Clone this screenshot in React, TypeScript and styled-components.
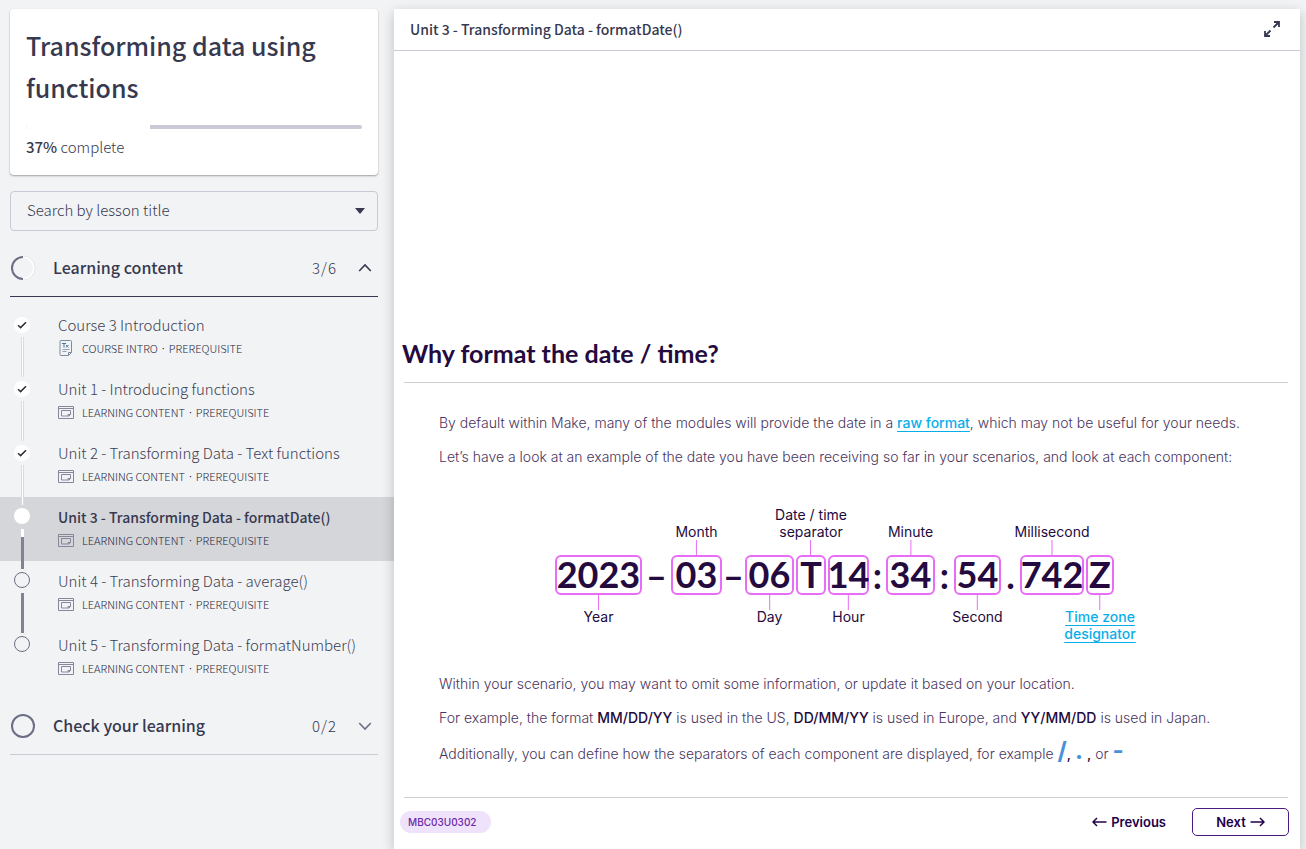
import React from "react";
import styled, { createGlobalStyle, css } from "styled-components";

const sans = `"Noto Sans CJK SC", "Open Sans", sans-serif`;
const inter = `Inter, "Liberation Sans", sans-serif`;
const display = `Lato, "Open Sans", sans-serif`;

const ink = "#36394f";
const inkMid = "#3c3e54";
const inkSoft = "#6b6e84";
const line = "#c9cad6";
const plum = "#240a3e";
const pink = "#e86cf5";
const sky = "#08aeea";

const GlobalStyle = createGlobalStyle`
  *, *::before, *::after { box-sizing: border-box; }
  body { margin: 0; background: #f2f3f5; color: ${ink}; font-family: ${sans}; }
  h1, h2, h3, p, ol { margin: 0; padding: 0; }
  button, select { font: inherit; color: inherit; }
`;

const Page = styled.div`
  display: grid;
  grid-template-columns: 394px minmax(0, 1fr);
  min-height: 100vh;
  padding: 9px 6px 0 0;
`;

const Sidebar = styled.aside`
  display: flex;
  flex-direction: column;
`;

const Card = styled.section`
  margin: 0 16px 0 10px;
  padding: 15px 16px 16px;
  background: #fff;
  border-radius: 4px;
  box-shadow: 0 1px 2px rgba(0, 0, 0, 0.35);
`;

const CourseTitle = styled.h1`
  font-size: 25px;
  line-height: 42px;
  font-weight: 500;
`;

const Track = styled.div`
  display: flex;
  height: 4px;
  margin-top: 17px;
  border-radius: 2px;
  background: ${line};
  overflow: hidden;
`;

const Fill = styled.div`
  background: #fff;
`;

const Complete = styled.p`
  margin-top: 6px;
  font-size: 15px;
  line-height: 24px;
  font-weight: 300;
  strong { font-weight: 500; }
`;

const SearchWrap = styled.div`
  position: relative;
  margin: 16px 16px 0 10px;
  svg { position: absolute; right: 13px; top: 17px; pointer-events: none; }
`;

const Search = styled.select`
  display: block;
  width: 100%;
  height: 40px;
  padding: 0 32px 4px 16px;
  appearance: none;
  border: 1px solid ${line};
  border-radius: 4px;
  background: transparent;
  font-size: 15px;
  font-weight: 300;
`;

const SectionButton = styled.button<{ $open?: boolean }>`
  display: flex;
  align-items: center;
  height: 57px;
  margin: 9px 16px 0 10px;
  padding: 0 6px 0 0;
  border: 0;
  border-bottom: 1px solid ${(p) => (p.$open ? ink : line)};
  background: none;
  text-align: left;
`;

const SectionName = styled.span`
  flex: 1;
  margin-left: 17px;
  padding-bottom: 2px;
  font-size: 16px;
  font-weight: 500;
`;

const Count = styled.span`
  margin-right: 21px;
  padding-bottom: 2px;
  font-size: 15px;
  font-weight: 300;
  letter-spacing: 1px;
`;

const Lessons = styled.ol`
  list-style: none;
  padding-top: 8px;
`;

const Lesson = styled.li<{ $active?: boolean }>`
  display: flex;
  height: 64px;
  padding: 8px 16px 0 14px;
  background: ${(p) => (p.$active ? "#d5d6da" : "none")};
`;

type State = "done" | "active" | "todo";
type Rail = "done" | "half" | "todo" | "none";

const Bubble = styled.span<{ $state: State; $rail: Rail }>`
  position: relative;
  display: grid;
  place-items: center;
  width: 16px;
  height: 16px;
  margin-top: ${(p) => (p.$state === "done" ? 4 : 3)}px;
  border-radius: 50%;
  ${(p) => (p.$state === "todo" ? css`border: 1px solid ${inkSoft};` : css`background: #fff;`)}
  ${(p) =>
    p.$rail !== "none" &&
    css`
      &::after {
        content: "";
        position: absolute;
        z-index: 1;
        top: ${p.$state === "active" ? 21 : 20}px;
        left: ${p.$state === "todo" ? 6 : 7}px;
        width: 3px;
        height: 40px;
        border: solid #d9dadf;
        border-width: 0 1px;
        background: #fff;
        ${p.$rail === "todo" && css`border: 0; background: #808297;`}
        ${p.$rail === "half" &&
        css`border: 0; background: linear-gradient(#fff 8px, #808297 8px);`}
      }
    `}
`;

const LessonText = styled.a`
  margin-left: 28px;
  color: ${inkMid};
  text-decoration: none;
`;

const LessonName = styled.span<{ $active?: boolean }>`
  display: block;
  font-size: ${(p) => (p.$active ? 14 : 15)}px;
  line-height: 24px;
  font-weight: ${(p) => (p.$active ? 500 : 300)};
  color: ${(p) => (p.$active ? ink : "inherit")};
`;

const LessonMeta = styled.span`
  display: flex;
  align-items: center;
  height: 22px;
  color: #26283a;
  font-size: 11px;
  line-height: 22px;
  font-weight: 300;
  svg { margin-right: 8px; }
`;

const Dot = styled.span`
  padding: 0 4px;
  font-family: "Open Sans", sans-serif;
  font-weight: 400;
`;

const Main = styled.main`
  position: relative;
  display: flex;
  flex-direction: column;
  background: #fff;
  box-shadow: 0 4px 12px rgba(0, 0, 0, 0.22);
`;

const TopBar = styled.header`
  display: flex;
  align-items: center;
  justify-content: space-between;
  height: 42px;
  padding: 0 19px 0 16px;
  border-bottom: 1px solid ${line};
`;

const UnitTitle = styled.h2`
  padding-bottom: 2px;
  font-size: 14px;
  font-weight: 500;
`;

const IconButton = styled.button`
  display: grid;
  padding: 0 0 2px;
  border: 0;
  background: none;
`;

const Slide = styled.article`
  flex: 1;
  display: flex;
  flex-direction: column;
  justify-content: flex-end;
  margin: 0 12px 0 10px;
  font-family: ${inter};
  color: ${plum};
`;

const SlideTitle = styled.h3`
  margin-left: -2px;
  padding-bottom: 13px;
  font-family: ${display};
  font-size: 25px;
  line-height: 32px;
  font-weight: 700;
`;

const SlideBody = styled.div`
  display: flex;
  flex-direction: column;
  gap: 10px;
  padding: 28px 0 29px 35px;
  border: solid #d3cbd3;
  border-width: 1px 0;
`;

const Para = styled.p<{ $tall?: boolean }>`
  font-size: 14px;
  line-height: ${(p) => (p.$tall ? 28 : 24)}px;
  font-weight: 300;
  color: #4a3560;
  strong { font-weight: 500; color: ${plum}; }
`;

const SkyLink = styled.a`
  font-weight: 500;
  color: ${sky};
  text-underline-offset: 3px;
`;

const Mark = styled.b`
  font-size: 24px;
  line-height: 16px;
  font-weight: 700;
  color: #4a90d9;
`;

const Diagram = styled.div`
  display: flex;
  align-items: center;
  height: 40px;
  margin: 76px 0 67px 116px;
  font-family: ${display};
  font-size: 36px;
  line-height: 34px;
  font-weight: 700;
`;

const Token = styled.span<{ $w: number }>`
  position: relative;
  display: flex;
  justify-content: center;
  width: ${(p) => p.$w}px;
  height: 40px;
  border: 2px solid ${pink};
  border-radius: 6px;
`;

const Sep = styled.span<{ $w: number }>`
  display: flex;
  justify-content: center;
  width: ${(p) => p.$w}px;
`;

const Callout = styled.span<{ $above?: boolean }>`
  position: absolute;
  left: 50%;
  ${(p) => (p.$above ? "bottom: 100%;" : "top: 100%;")}
  display: flex;
  flex-direction: ${(p) => (p.$above ? "column-reverse" : "column")};
  align-items: center;
  transform: translateX(-50%);
  font-family: ${inter};
  font-size: 14px;
  line-height: 17px;
  font-weight: 400;
  text-align: center;
  white-space: pre;
  &::before {
    content: "";
    width: 1px;
    height: 17px;
    margin-bottom: ${(p) => (p.$above ? 0 : -2)}px;
    background: ${pink};
  }
`;

const Footer = styled.footer`
  display: flex;
  align-items: center;
  height: 48px;
  margin: 0 0 3px -4px;
`;

const Chip = styled.span`
  margin-right: auto;
  padding: 0 14px 0 8px;
  border-radius: 11px;
  background: #efe3fb;
  color: #6d28a8;
  font-size: 10px;
  line-height: 22px;
  font-weight: 500;
`;

const NavButton = styled.button<{ $outlined?: boolean }>`
  display: flex;
  align-items: center;
  justify-content: center;
  gap: 4px;
  height: 28px;
  padding: 0;
  border: 0;
  background: none;
  color: #22004a;
  font-size: 13px;
  font-weight: 600;
  ${(p) =>
    p.$outlined &&
    css`
      width: 97px;
      margin: 0 -1px 0 26px;
      border: 1px solid #4b1a80;
      border-radius: 5px;
    `}
`;

const Chevron = ({ up }: { up?: boolean }) => (
  <svg width="14" height="10" viewBox="0 0 14 10" fill="none" stroke={up ? ink : inkSoft} strokeWidth="1.6">
    <path d={up ? "M1.2 8 7 2l5.8 6" : "M1.2 2 7 8l5.8-6"} />
  </svg>
);

const Tick = () => (
  <svg width="10" height="8" viewBox="0 0 10 8" fill="none" stroke="#2c2d38" strokeWidth="1.5">
    <path d="M1 4.2 3.6 6.6 9 1.2" />
  </svg>
);

const Ring = ({ half }: { half?: boolean }) => (
  <svg width="26" height="26" viewBox="0 0 26 26" fill="none" strokeWidth="2">
    <circle cx="13" cy="13" r="11" stroke={half ? "#fff" : inkSoft} />
    {half && <path d="M13 2a11 11 0 0 0 0 22" stroke={inkSoft} />}
    {half && <path d="M13 1a12 12 0 0 1 0 24" stroke="#d9dadf" strokeWidth=".6" />}
  </svg>
);

const ContentIcon = () => (
  <svg width="16" height="13" viewBox="0 0 16 13" fill="none" stroke="#85879a">
    <path d="M.5.5h15v12H.5zM.5 2.5h15M3.5 4.5h9v4l-1.5 1.500H3.500z" />
    <path d="M10 10V8.500h2.500" />
  </svg>
);

const IntroIcon = () => (
  <svg width="16" height="16" viewBox="0 0 16 16" fill="none" stroke="#7f8ba3">
    <path d="M3 .5h9.5q1 0 1 1v11l-3 3H3q-1 0-1-1v-13q0-1 1-1zM10.5 15.5v-3h3" />
    <path d="M4.5 9.5h7M4.5 11.5h4" strokeWidth=".8" />
    <path d="M4 3.5h4M6 3.5v4M8 5l2.5 2.5M10.5 5 8 7.5" stroke="#4f7397" />
  </svg>
);

const Arrow = ({ left }: { left?: boolean }) => (
  <svg width="15" height="10" viewBox="0 0 15 10" fill="none" stroke="currentColor" strokeWidth="1.5">
    <path d={left ? "M14.5 5H1M5 1 1 5l4 4" : "M.5 5H14M10 1l4 4-4 4"} />
  </svg>
);

const lessons: { name: string; kind: string; rail: Rail; state: State }[] = [
  { name: "Course 3 Introduction", kind: "COURSE INTRO", rail: "done", state: "done" },
  { name: "Unit 1 - Introducing functions", kind: "LEARNING CONTENT", rail: "done", state: "done" },
  { name: "Unit 2 - Transforming Data - Text functions", kind: "LEARNING CONTENT", rail: "done", state: "done" },
  { name: "Unit 3 - Transforming Data - formatDate()", kind: "LEARNING CONTENT", rail: "half", state: "active" },
  { name: "Unit 4 - Transforming Data - average()", kind: "LEARNING CONTENT", rail: "todo", state: "todo" },
  { name: "Unit 5 - Transforming Data - formatNumber()", kind: "LEARNING CONTENT", rail: "none", state: "todo" },
];

type Part = { text: string; w: number; label?: string; above?: boolean; link?: boolean };

const parts: Part[] = [
  { text: "2023", w: 87, label: "Year" },
  { text: "–", w: 29 },
  { text: "03", w: 51, label: "Month", above: true },
  { text: "–", w: 23 },
  { text: "06", w: 49, label: "Day" },
  { text: "", w: 2 },
  { text: "T", w: 30, label: "Date / time\nseparator", above: true },
  { text: "", w: 2 },
  { text: "14", w: 41, label: "Hour" },
  { text: ":", w: 17 },
  { text: "34", w: 49, label: "Minute", above: true },
  { text: ":", w: 19 },
  { text: "54", w: 47, label: "Second" },
  { text: ".", w: 19 },
  { text: "742", w: 64, label: "Millisecond", above: true },
  { text: "", w: 2 },
  { text: "Z", w: 28, label: "Time zone\ndesignator", link: true },
];

export default function App() {
  return (
    <>
      <GlobalStyle />
      <Page>
        <Sidebar>
          <Card>
            <CourseTitle>Transforming data using functions</CourseTitle>
            <Track role="progressbar" aria-valuenow={37} aria-label="Course progress">
              <Fill style={{ width: "37%" }} />
            </Track>
            <Complete>
              <strong>37%</strong> complete
            </Complete>
          </Card>
          <SearchWrap>
            <Search aria-label="Search by lesson title" defaultValue="">
              <option value="">Search by lesson title</option>
              {lessons.map((l) => (
                <option key={l.name}>{l.name}</option>
              ))}
            </Search>
            <svg width="10" height="6" viewBox="0 0 10 6" fill={ink}>
              <path d="M0 0h10L5 6z" />
            </svg>
          </SearchWrap>
          <SectionButton $open aria-expanded>
            <Ring half />
            <SectionName>Learning content</SectionName>
            <Count>3/6</Count>
            <Chevron up />
          </SectionButton>
          <Lessons>
            {lessons.map((l) => {
              const active = l.state === "active";
              return (
                <Lesson key={l.name} $active={active}>
                  <Bubble $state={l.state} $rail={l.rail}>
                    {l.state === "done" && <Tick />}
                  </Bubble>
                  <LessonText href="#">
                    <LessonName $active={active}>{l.name}</LessonName>
                    <LessonMeta>
                      {l.kind === "COURSE INTRO" ? <IntroIcon /> : <ContentIcon />}
                      {l.kind}
                      <Dot>·</Dot>
                      PREREQUISITE
                    </LessonMeta>
                  </LessonText>
                </Lesson>
              );
            })}
          </Lessons>
          <SectionButton aria-expanded={false}>
            <Ring />
            <SectionName>Check your learning</SectionName>
            <Count>0/2</Count>
            <Chevron />
          </SectionButton>
        </Sidebar>
        <Main>
          <TopBar>
            <UnitTitle>Unit 3 - Transforming Data - formatDate()</UnitTitle>
            <IconButton aria-label="Full screen">
              <svg width="18" height="18" viewBox="0 0 18 18" fill="none" stroke={ink} strokeWidth="1.8">
                <path d="M11 2h5v5M16 2l-5.5 5.5M7 16H2v-5M2 16l5.5-5.5" />
              </svg>
            </IconButton>
          </TopBar>
          <Slide>
            <SlideTitle>Why format the date / time?</SlideTitle>
            <SlideBody>
              <Para>
                By default within Make, many of the modules will provide the date in a{" "}
                <SkyLink href="#">raw format</SkyLink>, which may not be useful for your needs.
              </Para>
              <Para>
                Let’s have a look at an example of the date you have been receiving so far in your scenarios, and look
                at each component:
              </Para>
              <Diagram>
                {parts.map((p, i) =>
                  p.label ? (
                    <Token key={i} $w={p.w}>
                      {p.text}
                      <Callout $above={p.above}>
                        {p.link ? <SkyLink href="#">{p.label}</SkyLink> : <span>{p.label}</span>}
                      </Callout>
                    </Token>
                  ) : (
                    <Sep key={i} $w={p.w}>
                      {p.text}
                    </Sep>
                  )
                )}
              </Diagram>
              <Para>Within your scenario, you may want to omit some information, or update it based on your location.</Para>
              <Para>
                For example, the format <strong>MM/DD/YY</strong> is used in the US, <strong>DD/MM/YY</strong> is used
                in Europe, and <strong>YY/MM/DD</strong> is used in Japan.
              </Para>
              <Para $tall>
                Additionally, you can define how the separators of each component are displayed, for example{" "}
                <Mark>/</Mark>
                <strong>,</strong> <Mark>.</Mark> <strong>,</strong> or <Mark>-</Mark>
              </Para>
            </SlideBody>
            <Footer>
              <Chip>MBC03U0302</Chip>
              <NavButton>
                <Arrow left />
                Previous
              </NavButton>
              <NavButton $outlined>
                Next
                <Arrow />
              </NavButton>
            </Footer>
          </Slide>
        </Main>
      </Page>
    </>
  );
}
